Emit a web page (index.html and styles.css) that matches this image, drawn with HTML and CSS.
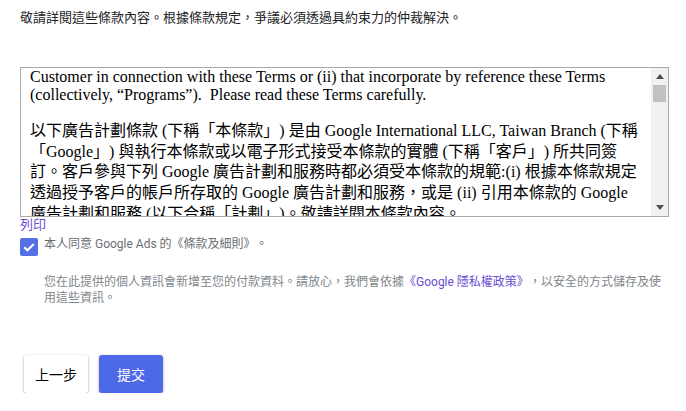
FILE: index.html
```html
<!DOCTYPE html>
<html lang="zh-Hant">
<head>
<meta charset="utf-8">
<title>條款及細則</title>
<link rel="stylesheet" href="styles.css">
</head>
<body>
<main class="page">
  <p class="intro">敬請詳閱這些條款內容。根據條款規定，爭議必須透過具約束力的仲裁解決。</p>

  <div class="terms-box">
    <div class="terms">
      <p class="terms-en">Customer in connection with these Terms or (ii) that incorporate by reference these Terms (collectively, “Programs”).&nbsp; Please read these Terms carefully.</p>
      <p class="terms-zh">以下廣告計劃條款 (下稱「本條款」) 是由 Google International LLC, Taiwan Branch (下稱「Google」) 與執行本條款或以電子形式接受本條款的實體 (下稱「客戶」) 所共同簽訂。客戶參與下列 Google 廣告計劃和服務時都必須受本條款的規範:(i) 根據本條款規定透過授予客戶的帳戶所存取的 Google 廣告計劃和服務，或是 (ii) 引用本條款的 Google 廣告計劃和服務 (以下合稱「計劃」)。敬請詳閱本條款內容。</p>
    </div>
    <div class="scrollbar" aria-hidden="true">
      <span class="sb-btn">
        <svg viewBox="0 0 8 5" width="8" height="5"><path d="M0 5 L4 0 L8 5 Z" fill="#505050"/></svg>
      </span>
      <span class="sb-track"><span class="sb-thumb"></span></span>
      <span class="sb-btn">
        <svg viewBox="0 0 8 5" width="8" height="5"><path d="M0 0 L8 0 L4 5 Z" fill="#505050"/></svg>
      </span>
    </div>
  </div>

  <a class="print-link" href="#">列印</a>

  <div class="agree">
    <span class="checkbox" role="checkbox" aria-checked="true">
      <svg viewBox="0 0 18 18" width="18" height="18" aria-hidden="true"><path d="M4.2 9.2 L7.4 12.3 L13.8 5.9" fill="none" stroke="#fff" stroke-width="2.1"/></svg>
    </span>
    <span class="agree-label">本人同意 Google Ads 的《條款及細則》。</span>
  </div>

  <p class="privacy">您在此提供的個人資訊會新增至您的付款資料。請放心，我們會依據<a class="privacy-link" href="#">《Google 隱私權政策》</a>，以安全的方式儲存及使用這些資訊。</p>

  <div class="actions">
    <button class="btn btn-back" type="button">上一步</button>
    <button class="btn btn-submit" type="button">提交</button>
  </div>
</main>
</body>
</html>
```

FILE: styles.css
```css
html, body {
  margin: 0;
  padding: 0;
  background: #fff;
}

body {
  font-family: Roboto, "Noto Sans CJK TC", sans-serif;
  color: #202124;
  text-spacing-trim: space-all;
}

.page {
  padding: 9px 17px 0 20px;
}

.intro {
  margin: 0;
  font-size: 13px;
  line-height: 18px;
  color: #202124;
}

.terms-box {
  display: flex;
  margin-top: 40px;
  height: 148px;
  border: 1px solid #a9a9a9;
}

.terms {
  flex: 1;
  min-width: 0;
  overflow: hidden;
  font-family: "Liberation Serif", "Noto Sans CJK TC", serif;
  font-size: 16px;
  color: #000;
  padding: 0 6px 0 9px;
}

.terms p {
  margin: 0;
}

.terms-en {
  line-height: 18px;
  white-space: pre-wrap;
  padding-bottom: 17px;
}

.terms-zh {
  line-height: 20.7px;
}

.scrollbar {
  width: 17px;
  flex: none;
  display: flex;
  flex-direction: column;
  background: #f1f1f1;
}

.sb-btn {
  height: 17px;
  flex: none;
  display: flex;
  align-items: center;
  justify-content: center;
}

.sb-track {
  flex: 1;
  display: flex;
  flex-direction: column;
  padding: 0 2px;
}

.sb-thumb {
  height: 17px;
  background: #c1c1c1;
}

.print-link {
  display: block;
  width: max-content;
  font-size: 13px;
  line-height: 16px;
  color: #6a4bd1;
  text-decoration: none;
}

.agree {
  display: flex;
  align-items: flex-start;
  gap: 6px;
  margin-top: 5px;
}

.checkbox {
  display: flex;
  width: 18px;
  height: 18px;
  flex: none;
  border-radius: 2px;
  background: #5470e6;
}

.agree-label {
  font-size: 12px;
  line-height: 12px;
  color: #6b6e72;
}

.privacy {
  margin: 18px 5px 0 24px;
  font-size: 12px;
  line-height: 16px;
  color: #80868b;
}

.privacy-link {
  color: #6a4bd1;
  text-decoration: none;
}

.actions {
  display: flex;
  gap: 11px;
  margin-top: 49px;
  padding-left: 4px;
}

.btn {
  width: 64px;
  height: 38px;
  border: none;
  border-radius: 3px;
  font-family: Roboto, "Noto Sans CJK TC", sans-serif;
  font-size: 14px;
  padding: 0;
  cursor: pointer;
  box-shadow: 0 1px 3px rgba(0, 0, 0, 0.35);
}

.btn-back {
  background: #fff;
  color: #000;
}

.btn-submit {
  background: #4d69e8;
  color: #fff;
}
```
